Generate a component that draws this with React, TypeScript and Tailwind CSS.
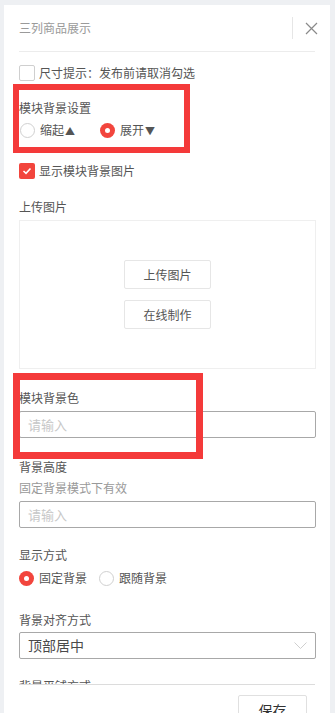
import React from "react";

const font = { fontFamily: '"Noto Sans CJK SC", "Noto Sans", sans-serif' };

function Radio({ checked, label, tri }: { checked: boolean; label: string; tri?: string }) {
  return (
    <div className="flex items-center gap-[5px]">
      {checked ? (
        <span className="w-[15px] h-[15px] rounded-full bg-[#f2453d] flex items-center justify-center">
          <span className="w-[5px] h-[5px] rounded-full bg-white" />
        </span>
      ) : (
        <span className="w-[15px] h-[15px] rounded-full border border-[#d0d0d0] bg-white" />
      )}
      <span className="text-[12px] text-[#555] flex items-center">
        {label}
        {tri ? <span className="text-[10px] text-[#555] ml-[1px]">{tri}</span> : null}
      </span>
    </div>
  );
}

function Label({ children, className = "" }: { children: React.ReactNode; className?: string }) {
  return <div className={"h-[20px] leading-[20px] text-[12px] text-[#555] " + className}>{children}</div>;
}

function Input({ className = "" }: { className?: string }) {
  return (
    <div className={"h-[27px] border border-[#a8a8a8] rounded-[2px] flex items-center px-[8px] text-[13px] text-[#c8c8c8] " + className}>
      请输入
    </div>
  );
}

export default function App() {
  return (
    <div className="w-[335px] h-[713px] bg-[#eef0f3] pl-[4px] pr-[5px] pt-[5px] overflow-hidden" style={font}>
      <div className="relative bg-white h-[708px] flex flex-col">
        {/* header */}
        <div className="h-[47px] mx-[15px] border-b border-[#ececec] flex items-center shrink-0">
          <span className="text-[12px] text-[#9a9a9a] flex-1">三列商品展示</span>
          <span className="w-px h-[22px] bg-[#e6e6e6] mr-[12px]" />
          <svg width="13" height="13" viewBox="0 0 13 13" className="mr-[-3px]">
            <path d="M1 1L12 12M12 1L1 12" stroke="#8a8a8a" strokeWidth="1.2" />
          </svg>
        </div>

        {/* scroll content */}
        <div className="flex-1 overflow-hidden px-[15px] pr-[14px]">
          <div className="flex items-center gap-[4px] mt-[11px] h-[20px]">
            <span className="w-[16px] h-[16px] border border-[#cfcfcf] rounded-[2px] bg-white" />
            <span className="text-[12px] text-[#555]">尺寸提示：发布前请取消勾选</span>
          </div>

          <Label className="mt-[15px]">模块背景设置</Label>
          <div className="flex items-center h-[20px] mt-[2px] pl-[1px]">
            <div className="w-[80px]">
              <Radio checked={false} label="缩起" tri="▲" />
            </div>
            <Radio checked label="展开" tri="▼" />
          </div>

          <div className="flex items-center gap-[4px] mt-[21px] h-[20px]">
            <span className="w-[16px] h-[16px] rounded-[2px] bg-[#f2453d] flex items-center justify-center">
              <svg width="10" height="8" viewBox="0 0 10 8">
                <path d="M1.5 4L4 6.3L8.5 1.5" fill="none" stroke="#fff" strokeWidth="1.6" />
              </svg>
            </span>
            <span className="text-[12px] text-[#555]">显示模块背景图片</span>
          </div>

          <Label className="mt-[16px]">上传图片</Label>
          <div className="mt-[3px] h-[149px] border border-[#efefef] flex flex-col items-center justify-center gap-[11px]">
            <div className="w-[87px] h-[29px] border border-[#e6e6e6] rounded-[2px] flex items-center justify-center text-[12px] text-[#555]">
              上传图片
            </div>
            <div className="w-[87px] h-[29px] border border-[#e6e6e6] rounded-[2px] flex items-center justify-center text-[12px] text-[#555]">
              在线制作
            </div>
          </div>

          <Label className="mt-[19px]">模块背景色</Label>
          <Input className="mt-[3px]" />

          <Label className="mt-[19px]">背景高度</Label>
          <div className="h-[20px] leading-[20px] text-[12px] text-[#999] mt-[1px]">固定背景模式下有效</div>
          <Input className="mt-[3px]" />

          <Label className="mt-[17px]">显示方式</Label>
          <div className="flex items-center h-[20px] mt-[3px]">
            <div className="w-[80px]">
              <Radio checked label="固定背景" />
            </div>
            <Radio checked={false} label="跟随背景" />
          </div>

          <Label className="mt-[22px]">背景对齐方式</Label>
          <div className="mt-[2px] h-[27px] border border-[#a8a8a8] rounded-[2px] flex items-center pl-[8px] pr-[8px]">
            <span className="flex-1 text-[14px] text-[#4a4a4a]">顶部居中</span>
            <svg width="13" height="8" viewBox="0 0 13 8">
              <path d="M0.5 0.5L6.5 6.5L12.5 0.5" fill="none" stroke="#cfcfcf" strokeWidth="1" />
            </svg>
          </div>

          <Label className="mt-[17px]">背景平铺方式</Label>
        </div>

        {/* footer */}
        <div className="shrink-0 mx-[15px] border-t border-[#dcdcdc] h-[29px] flex justify-end pr-[8px] pt-[10px]">
          <div className="w-[69px] h-[30px] border border-[#e0e0e0] rounded-[2px] flex items-start justify-center pt-[4px] text-[14px] text-[#333]">
            保存
          </div>
        </div>

        {/* annotation boxes */}
        <div className="absolute left-[9px] top-[79px] w-[177px] h-[69px] border-[6px] border-[#f43a3a] pointer-events-none" />
        <div className="absolute left-[9px] top-[368px] w-[190px] h-[86px] border-[7px] border-[#f43a3a] pointer-events-none" />
      </div>
    </div>
  );
}
